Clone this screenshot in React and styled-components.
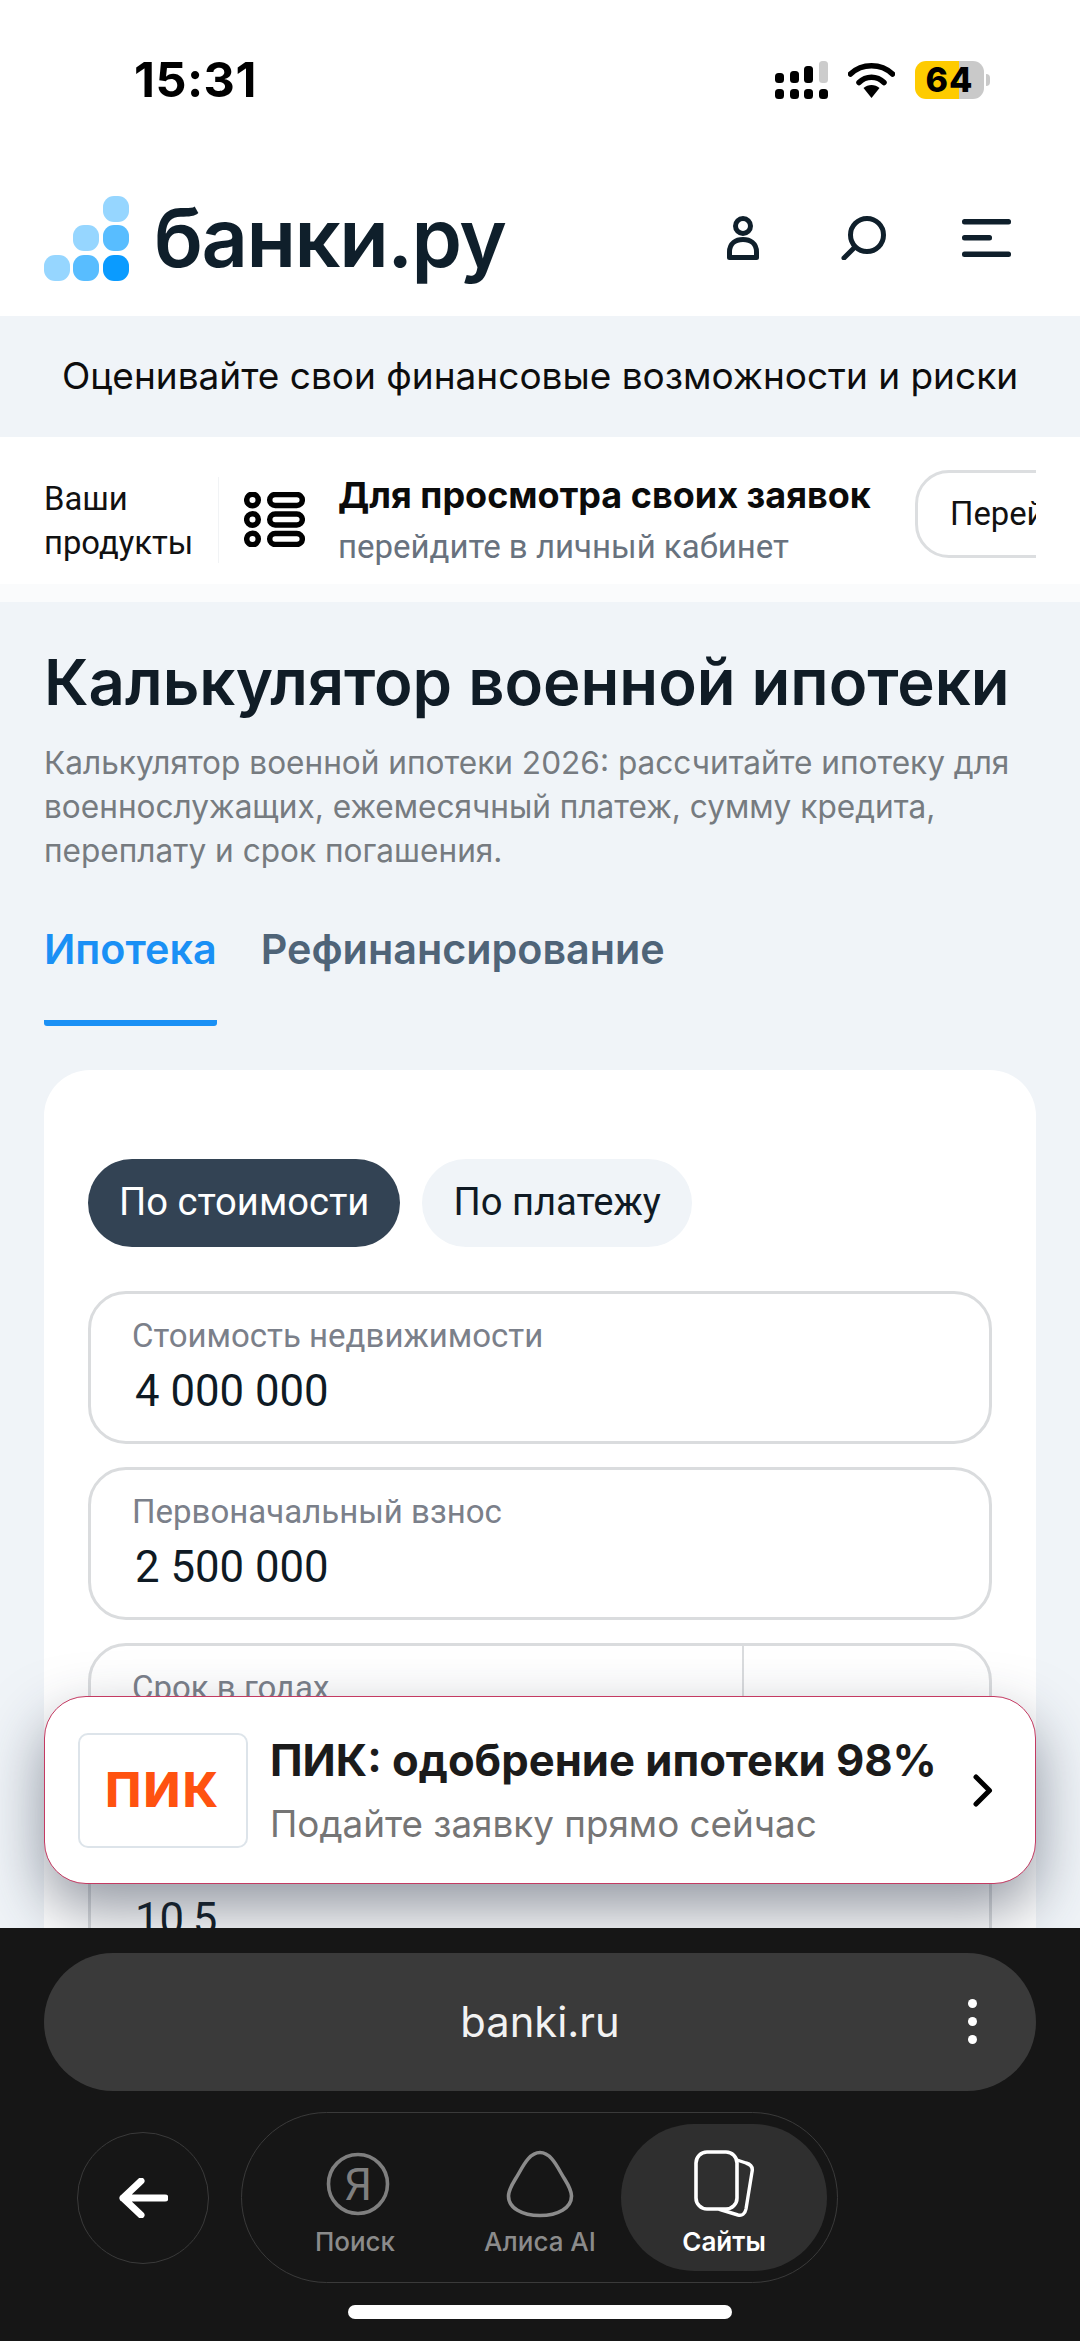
import React from "react";
import styled, { createGlobalStyle } from "styled-components";

const Global = createGlobalStyle`
  html, body { margin: 0; padding: 0; background: #fff; }
  body { font-family: "Inter", "Liberation Sans", sans-serif; }
  * { box-sizing: border-box; }
`;

const Phone = styled.div`
  width: 1080px;
  height: 2341px;
  display: flex;
  flex-direction: column;
  overflow: hidden;
  background: #f0f4f8;
`;

/* status bar */
const StatusBar = styled.div`
  height: 160px;
  background: #fff;
  padding: 61px 96px 0 134px;
  display: flex;
  justify-content: space-between;
  align-items: flex-start;
`;
const Clock = styled.span`
  font: 700 48.5px/38px "Inter", sans-serif;
  color: #000;
  letter-spacing: 0.5px;
`;
const StatusIcons = styled.div`
  display: flex;
  align-items: flex-start;
  gap: 20px;
`;
const Battery = styled.div`
  position: relative;
  width: 69px;
  height: 38px;
  border-radius: 11px;
  background: linear-gradient(90deg, #fecb00 ${(p) => p.$level}%, #c9c9c9 ${(p) => p.$level}%);
  font: 800 34px/38px "Inter", sans-serif;
  letter-spacing: 1px;
  color: #000;
  text-align: center;
  &::after {
    content: "";
    position: absolute;
    right: -6px;
    top: 13px;
    width: 4px;
    height: 12px;
    border-radius: 0 4px 4px 0;
    background: #c9c9c9;
  }
`;

/* site header */
const Header = styled.header`
  height: 156px;
  background: #fff;
  padding: 0 69px 0 44px;
  display: flex;
  align-items: center;
`;
const Logo = styled.div`
  display: flex;
  align-items: center;
  gap: 25px;
  flex: 1;
`;
const LogoText = styled.span`
  font: 600 81px/80px "Inter", sans-serif;
  color: #0f1f2b;
  letter-spacing: -1.5px;
`;
const HeaderIcons = styled.div`
  display: flex;
  align-items: center;
  gap: 76px;
`;

const Main = styled.main`
  position: relative;
  flex: 1;
  min-height: 0;
  overflow: hidden;
`;

const Promo = styled.div`
  height: 121px;
  padding-bottom: 2px;
  display: flex;
  align-items: center;
  justify-content: center;
  font: 400 37px/44px "Inter", sans-serif;
  color: #0d0d0d;
`;

/* products strip */
const Products = styled.section`
  height: 165px;
  padding: 0 44px;
  display: flex;
  align-items: center;
  background: linear-gradient(#fff 147px, #fafbfc 147px);
`;
const ProductsInner = styled.div`
  width: 100%;
  display: flex;
  align-items: center;
  overflow: hidden;
`;
const ProductsLabel = styled.div`
  width: 175px;
  height: 86px;
  flex-shrink: 0;
  border-right: 1px solid #f1f3f5;
  font: 400 32.8px/44px "Roboto", sans-serif;
  color: #111;
`;
const ProductsIcon = styled.div`
  margin: 0 33px 0 25px;
  flex-shrink: 0;
  display: flex;
`;
const ProductsText = styled.div`
  width: 577px;
  flex-shrink: 0;
`;
const ProductsTitle = styled.div`
  font: 700 36px/44px "Inter", sans-serif;
  color: #0b0b0b;
  white-space: nowrap;
`;
const ProductsSub = styled.div`
  margin-top: 10px;
  font: 400 33px/40px "Roboto", sans-serif;
  color: #68727e;
  white-space: nowrap;
`;
const OutlineButton = styled.div`
  flex-shrink: 0;
  height: 88px;
  width: 200px;
  margin-bottom: 12px;
  padding-left: 32px;
  border: 3px solid #dcdee0;
  border-radius: 34px;
  font: 400 32.8px/82px "Roboto", sans-serif;
  color: #111;
  white-space: nowrap;
`;

/* title block */
const Intro = styled.section`
  padding: 0 44px;
`;
const Title = styled.h1`
  margin: 40px 0 0;
  font: 600 63.4px/80px "Inter", sans-serif;
  color: #101c26;
  white-space: nowrap;
`;
const Lead = styled.p`
  margin: 19px 0 0;
  font: 400 31.6px/44px "Inter", sans-serif;
  color: #767b80;
`;
const Tabs = styled.div`
  margin-top: 46px;
  display: flex;
  gap: 44px;
`;
const Tab = styled.div`
  height: 107px;
  padding-top: 4px;
  border-bottom: ${(p) => (p.$active ? "6px solid #1a90f5" : "none")};
  border-radius: 0 0 3px 3px;
  font: 600 41.3px/52px "Inter", sans-serif;
  color: ${(p) => (p.$active ? "#1a90f5" : "#4f6478")};
  white-space: nowrap;
`;

/* calculator */
const Card = styled.section`
  margin: 44px 44px 0;
  padding: 89px 44px 0;
  background: #fff;
  border-radius: 46px;
`;
const Pills = styled.div`
  display: flex;
  gap: 22px;
`;
const Pill = styled.div`
  height: 88px;
  padding: 0 31px;
  border-radius: 44px;
  background: ${(p) => (p.$active ? "#334354" : "#f0f4f8")};
  color: ${(p) => (p.$active ? "#fff" : "#0f1a24")};
  font: 400 38.2px/86px "Roboto", sans-serif;
  white-space: nowrap;
`;
const Fields = styled.div`
  margin-top: 44px;
  display: flex;
  flex-direction: column;
  gap: 23px;
`;
const Field = styled.div`
  position: relative;
  height: 153px;
  padding: 22px 41px 0;
  border: 3px solid #dadcde;
  border-radius: 38px;
  overflow: hidden;
  background: #fff;
`;
const FieldDivider = styled.div`
  position: absolute;
  top: 0;
  bottom: 0;
  right: 245px;
  width: 2px;
  background: #dadcde;
`;
const FieldLabel = styled.div`
  font: 400 33px/40px "Roboto", sans-serif;
  color: #7b808a;
`;
const FieldValue = styled.div`
  margin-top: 7px;
  margin-left: 3px;
  font: 400 43.7px/56px "Roboto", sans-serif;
  color: #0f1a24;
`;

/* floating offer */
const Offer = styled.aside`
  position: absolute;
  left: 44px;
  right: 44px;
  bottom: 44px;
  height: 188px;
  padding: 0 42px 0 33px;
  display: flex;
  align-items: center;
  background: #fff;
  border: 1.5px solid #c43a62;
  border-radius: 42px;
  box-shadow: 0 26px 60px rgba(40, 50, 70, 0.5);
`;
const OfferLogo = styled.div`
  width: 170px;
  height: 115px;
  flex-shrink: 0;
  border: 2.5px solid #dde4ea;
  border-radius: 10px;
  display: flex;
  align-items: center;
  justify-content: center;
  font: 800 48px/48px "Inter", sans-serif;
  color: #ff5210;
  letter-spacing: 2.5px;
`;
const OfferText = styled.div`
  margin-left: 22px;
  flex: 1;
`;
const OfferTitle = styled.div`
  font: 700 43.6px/50px "Inter", sans-serif;
  color: #1b1b1b;
  white-space: nowrap;
  margin-top: 2px;
`;
const OfferSub = styled.div`
  margin-top: 15px;
  font: 400 36.8px/46px "Inter", sans-serif;
  color: #757575;
  white-space: nowrap;
`;

/* browser chrome */
const Browser = styled.div`
  height: 413px;
  flex-shrink: 0;
  background: #161616;
  padding: 25px 44px 0;
  display: flex;
  flex-direction: column;
`;
const UrlBar = styled.div`
  position: relative;
  height: 138px;
  border-radius: 69px;
  background: #3a3a3a;
  display: flex;
  align-items: center;
  justify-content: center;
  font: 400 41.7px/48px "Inter", sans-serif;
  color: #f2f2f2;
`;
const UrlDots = styled.div`
  position: absolute;
  right: 59px;
  top: 46px;
  display: flex;
  flex-direction: column;
  gap: 9px;
  & i {
    display: block;
    width: 9px;
    height: 9px;
    border-radius: 50%;
    background: #fff;
  }
`;
const NavRow = styled.div`
  margin-top: 21px;
  padding-left: 33px;
  display: flex;
  align-items: center;
  gap: 32px;
`;
const BackButton = styled.div`
  width: 132px;
  height: 132px;
  border: 1.5px solid #3a3a3a;
  border-radius: 50%;
  display: flex;
  align-items: center;
  justify-content: center;
`;
const NavGroup = styled.div`
  width: 597px;
  height: 171px;
  padding: 11px 11px 11px 19px;
  border: 1.5px solid #3a3a3a;
  border-radius: 86px;
  display: flex;
`;
const NavItem = styled.div`
  width: ${(p) => p.$width}px;
  margin-left: ${(p) => (p.$active ? -10 : 0)}px;
  flex-shrink: 0;
  border-radius: 74px;
  padding-top: 24px;
  background: ${(p) => (p.$active ? "#2f2f2f" : "transparent")};
  display: flex;
  flex-direction: column;
  align-items: center;
`;
const NavIcon = styled.div`
  height: 72px;
  display: flex;
  align-items: center;
  margin-left: ${(p) => p.$shift || 0}px;
`;
const NavLabel = styled.div`
  margin-top: 6px;
  font: ${(p) => (p.$active ? 600 : 500)} 26px/32px "Inter", sans-serif;
  color: ${(p) => (p.$active ? "#fff" : "#8b8b8b")};
  white-space: nowrap;
`;
const HomeIndicator = styled.div`
  width: 384px;
  height: 14px;
  margin: 22px auto 0;
  border-radius: 7px;
  background: #fff;
`;

const LogoDots = () => (
  <svg width="85" height="85" viewBox="0 0 85 85">
    <rect x="59" y="0" width="26" height="26" rx="11" fill="#96d6ff" />
    <rect x="29" y="29" width="26" height="26" rx="11" fill="#96d6ff" />
    <rect x="59" y="29" width="26" height="26" rx="11" fill="#58bdff" />
    <rect x="0" y="59" width="26" height="26" rx="11" fill="#96d6ff" />
    <rect x="29" y="59" width="26" height="26" rx="11" fill="#58bdff" />
    <rect x="59" y="59" width="26" height="26" rx="11" fill="#0a9bff" />
  </svg>
);

const SignalIcon = () => (
  <svg width="53" height="38" viewBox="0 0 53 38">
    <rect x="0" y="12" width="9" height="10" rx="3.5" fill="#000" />
    <rect x="15" y="10" width="9" height="12" rx="3.5" fill="#000" />
    <rect x="29" y="5" width="9" height="17" rx="3.5" fill="#000" />
    <rect x="44" y="0" width="9" height="22" rx="3.5" fill="#ccc" />
    {[0, 15, 29, 44].map((x) => (
      <rect key={x} x={x} y="28" width="9" height="10" rx="3.5" fill="#000" />
    ))}
  </svg>
);

const WifiIcon = () => (
  <svg width="47" height="35" viewBox="0 0 47 35" style={{ marginTop: 2 }}>
    <path d="M2.5 11 C14 0 33 0 44.5 11" fill="none" stroke="#000" strokeWidth="5.5" strokeLinecap="round" />
    <path d="M11 19.5 C18 12.5 29 12.5 36 19.5" fill="none" stroke="#000" strokeWidth="5.5" strokeLinecap="round" />
    <path d="M15.5 25 C20 21 27 21 31.5 25 L23.5 35 Z" fill="#000" />
  </svg>
);

const UserIcon = () => (
  <svg width="38" height="44" viewBox="0 0 38 44">
    <circle cx="16" cy="10" r="7.5" fill="none" stroke="#0f1f2b" strokeWidth="5" />
    <path d="M2.5 41.5 V36 C2.5 27 9 23.5 16 23.5 C23 23.5 29.5 27 29.5 36 V41.5 Z" fill="none" stroke="#0f1f2b" strokeWidth="5" strokeLinejoin="round" />
  </svg>
);

const SearchIcon = () => (
  <svg width="45" height="44" viewBox="0 0 45 44">
    <circle cx="26" cy="19" r="16.5" fill="none" stroke="#0f1f2b" strokeWidth="5" />
    <path d="M13 32 L3 42" fill="none" stroke="#0f1f2b" strokeWidth="5" strokeLinecap="round" />
  </svg>
);

const MenuIcon = () => (
  <svg width="49" height="38" viewBox="0 0 49 38">
    <rect x="0" y="0" width="49" height="5.5" rx="2.5" fill="#0f1f2b" />
    <rect x="0" y="16" width="30" height="5.5" rx="2.5" fill="#0f1f2b" />
    <rect x="0" y="32.5" width="49" height="5.5" rx="2.5" fill="#0f1f2b" />
  </svg>
);

const ProductsGlyph = () => (
  <svg width="61" height="55" viewBox="0 0 61 55">
    {[8, 27.5, 47].map((y) => (
      <g key={y} fill="none" stroke="#000" strokeWidth="5.5">
        <circle cx="8.5" cy={y} r="5.8" />
        <rect x="25.7" y={y - 5.5} width="32.6" height="11" rx="5.5" />
      </g>
    ))}
  </svg>
);

const Chevron = () => (
  <svg width="20" height="33" viewBox="0 0 20 33">
    <path d="M3 3 L16.5 16.5 L3 30" fill="none" stroke="#000" strokeWidth="5" strokeLinecap="round" strokeLinejoin="round" />
  </svg>
);

const BackArrow = () => (
  <svg width="49" height="40" viewBox="0 0 49 40">
    <path d="M22 3 L4 20 L22 37 M4 20 H46" fill="none" stroke="#fff" strokeWidth="7" strokeLinecap="round" strokeLinejoin="round" />
  </svg>
);

const YandexIcon = () => (
  <svg width="64" height="64" viewBox="0 0 64 64">
    <circle cx="32" cy="32" r="29.5" fill="none" stroke="#7f7f7f" strokeWidth="3.6" />
    <text x="32" y="48" textAnchor="middle" fontFamily="Roboto, sans-serif" fontWeight="400" fontSize="44" fill="#7f7f7f">Я</text>
  </svg>
);

const AliceIcon = () => (
  <svg width="68" height="68" viewBox="0 0 68 68">
    <path d="M34 2.5 C25 2.5 19 12 13 23 C8 32 2.5 38 2.5 46 C2.5 58 16 65.5 34 65.5 C52 65.5 65.5 58 65.5 46 C65.5 38 60 32 55 23 C49 12 43 2.5 34 2.5 Z" fill="none" stroke="#8b8b8b" strokeWidth="3.6" />
  </svg>
);

const SitesIcon = () => (
  <svg width="62" height="68" viewBox="0 0 62 68">
    <path d="M44 10 L53 13 C58 14.5 60 18 59 22 L53 59 C52 64 49 66 45 65 L27 59.5" fill="none" stroke="#fff" strokeWidth="3.4" strokeLinecap="round" />
    <rect x="3" y="2" width="41" height="57" rx="11" fill="#2f2f2f" stroke="#fff" strokeWidth="3.6" />
  </svg>
);

export default function App() {
  return (
    <Phone>
      <Global />
      <StatusBar>
        <Clock>15:31</Clock>
        <StatusIcons>
          <SignalIcon />
          <WifiIcon />
          <Battery $level={64}>64</Battery>
        </StatusIcons>
      </StatusBar>
      <Header>
        <Logo>
          <LogoDots />
          <LogoText>банки.ру</LogoText>
        </Logo>
        <HeaderIcons>
          <UserIcon />
          <SearchIcon />
          <MenuIcon />
        </HeaderIcons>
      </Header>
      <Main>
        <Promo>Оценивайте свои финансовые возможности и риски</Promo>
        <Products>
          <ProductsInner>
            <ProductsLabel>Ваши<br />продукты</ProductsLabel>
            <ProductsIcon><ProductsGlyph /></ProductsIcon>
            <ProductsText>
              <ProductsTitle>Для просмотра своих заявок</ProductsTitle>
              <ProductsSub>перейдите в личный кабинет</ProductsSub>
            </ProductsText>
            <OutlineButton>Перейти</OutlineButton>
          </ProductsInner>
        </Products>
        <Intro>
          <Title>Калькулятор военной ипотеки</Title>
          <Lead>
            Калькулятор военной ипотеки 2026: рассчитайте ипотеку для
            военнослужащих, ежемесячный платеж, сумму кредита,
            переплату и срок погашения.
          </Lead>
          <Tabs>
            <Tab $active>Ипотека</Tab>
            <Tab>Рефинансирование</Tab>
          </Tabs>
        </Intro>
        <Card>
          <Pills>
            <Pill $active>По стоимости</Pill>
            <Pill>По платежу</Pill>
          </Pills>
          <Fields>
            <Field>
              <FieldLabel>Стоимость недвижимости</FieldLabel>
              <FieldValue>4 000 000</FieldValue>
            </Field>
            <Field>
              <FieldLabel>Первоначальный взнос</FieldLabel>
              <FieldValue>2 500 000</FieldValue>
            </Field>
            <Field>
              <FieldDivider />
              <FieldLabel>Срок в годах</FieldLabel>
              <FieldValue>20</FieldValue>
            </Field>
            <Field>
              <FieldLabel>Ставка</FieldLabel>
              <FieldValue>10,5</FieldValue>
            </Field>
          </Fields>
        </Card>
        <Offer>
          <OfferLogo>ПИК</OfferLogo>
          <OfferText>
            <OfferTitle>ПИК: одобрение ипотеки 98%</OfferTitle>
            <OfferSub>Подайте заявку прямо сейчас</OfferSub>
          </OfferText>
          <Chevron />
        </Offer>
      </Main>
      <Browser>
        <UrlBar>
          banki.ru
          <UrlDots><i /><i /><i /></UrlDots>
        </UrlBar>
        <NavRow>
          <BackButton><BackArrow /></BackButton>
          <NavGroup>
            <NavItem $width={188}>
              <NavIcon $shift={5}><YandexIcon /></NavIcon>
              <NavLabel>Поиск</NavLabel>
            </NavItem>
            <NavItem $width={182}>
              <NavIcon><AliceIcon /></NavIcon>
              <NavLabel>Алиса AI</NavLabel>
            </NavItem>
            <NavItem $width={206} $active>
              <NavIcon><SitesIcon /></NavIcon>
              <NavLabel $active>Сайты</NavLabel>
            </NavItem>
          </NavGroup>
        </NavRow>
        <HomeIndicator />
      </Browser>
    </Phone>
  );
}
